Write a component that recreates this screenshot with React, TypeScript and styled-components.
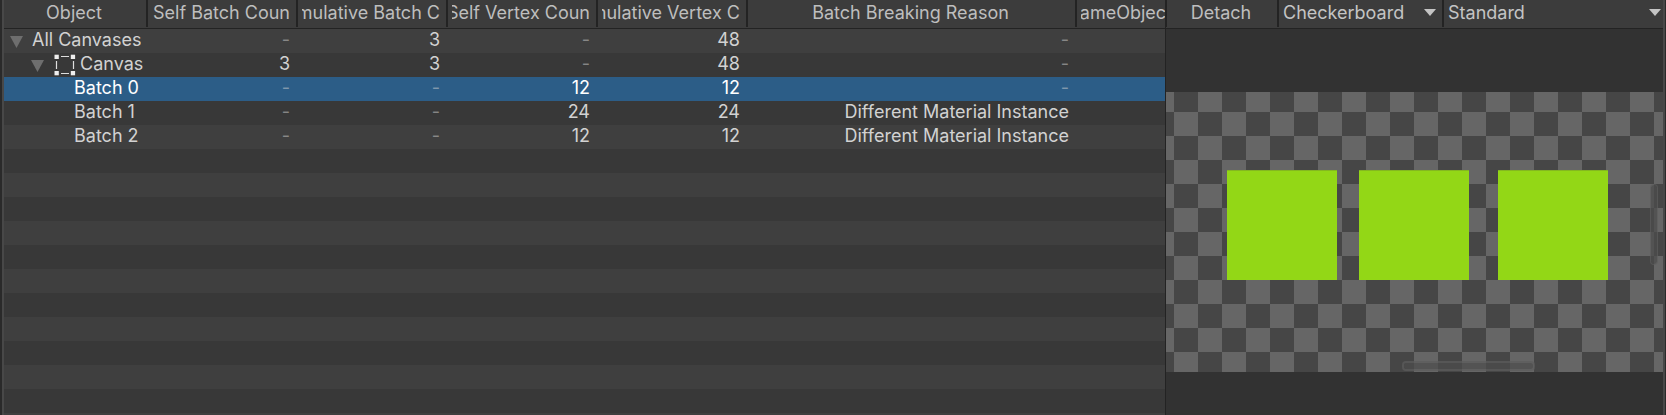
import React from "react";
import styled, { createGlobalStyle } from "styled-components";

const GlobalStyle = createGlobalStyle`
  *, *::before, *::after { box-sizing: border-box; }
  body {
    margin: 0;
    background: #2a2a2a;
    color: #d2d2d2;
    font-family: Inter, "Liberation Sans", sans-serif;
    font-size: 18px;
    line-height: 24px;
  }
`;

const Window = styled.main`
  display: flex;
  min-height: 100vh;
  margin: 0 1px 0 2px;
  border-left: 2px solid #484848;
  border-right: 2px solid #484848;
  background: #383838;
`;

const BatchPanel = styled.section`
  flex: 1;
  min-width: 0;
  overflow: hidden;
  border-right: 1px solid #232323;
  background: repeating-linear-gradient(#3f3f3f 0 24px, #383838 24px 48px) 0 29px;
`;

const BatchTable = styled.table`
  width: 100%;
  table-layout: fixed;
  border-collapse: separate;
  border-spacing: 0;
`;

const Column = styled.col<{ $width?: number }>`
  width: ${(p) => (p.$width ? `${p.$width}px` : "auto")};
`;

const HeaderCell = styled.th`
  height: 29px;
  padding: 0;
  border-bottom: 1px solid #232323;
  background: #3c3c3c;
  color: #bebebe;
  font-weight: 400;
  vertical-align: top;
`;

const HeaderBox = styled.div<{ $last?: boolean }>`
  height: 27px;
  padding: 0 ${(p) => (p.$last ? 0 : 6)}px 0 4px;
  border-right: ${(p) => (p.$last ? "0" : "2px solid #232323")};
`;

const HeaderLabel = styled.div<{ $end?: boolean }>`
  display: flex;
  justify-content: ${(p) => (p.$end ? "flex-end" : "center")};
  overflow: hidden;
  white-space: nowrap;
  line-height: 26px;
`;

const Row = styled.tr<{ $tone: "light" | "dark" | "selected" }>`
  height: 24px;
  background: ${(p) => ({ light: "#3f3f3f", dark: "#383838", selected: "#2c5d87" })[p.$tone]};
  color: ${(p) => (p.$tone === "selected" ? "#ffffff" : "#d2d2d2")};
`;

const Cell = styled.td<{ $empty?: boolean }>`
  height: 24px;
  padding: 0 8px 0 3px;
  overflow: hidden;
  text-align: right;
  line-height: 22px;
  white-space: nowrap;
  vertical-align: top;
  color: ${(p) => (p.$empty ? "rgba(210, 210, 210, 0.5)" : "inherit")};
`;

const NameCell = styled.th<{ $indent: number }>`
  height: 24px;
  padding: 0 0 0 ${(p) => p.$indent}px;
  font-weight: 400;
  text-align: left;
  vertical-align: top;
`;

const Name = styled.div`
  display: flex;
  line-height: 22px;
  white-space: nowrap;
`;

const NameText = styled.span<{ $clip?: boolean }>`
  min-width: 0;
  overflow: hidden;
  margin-right: ${(p) => (p.$clip ? 5 : 0)}px;
`;

const Foldout = styled.button`
  display: flex;
  flex: none;
  width: 22px;
  height: 24px;
  padding: 7px 0 0 0;
  border: 0;
  background: none;
`;

const RectIcon = styled.svg`
  flex: none;
  width: 22px;
  height: 22px;
  margin: 1px 4px 0 1px;
`;

const PreviewPanel = styled.section`
  display: flex;
  flex: none;
  flex-direction: column;
  width: 497px;
  background: #323232;
`;

const Toolbar = styled.div`
  display: flex;
  height: 29px;
  border-bottom: 1px solid #232323;
  background: #3c3c3c;
`;

const DetachButton = styled.button`
  width: 113px;
  height: 27px;
  padding: 0 2px 1px 0;
  border: 0;
  border-left: 1px solid #232323;
  border-right: 2px solid #232323;
  background: none;
  color: #bebebe;
  font: inherit;
`;

const SelectBox = styled.div<{ $width?: number }>`
  position: relative;
  height: 27px;
  ${(p) => (p.$width ? `width: ${p.$width}px; border-right: 2px solid #232323;` : "flex: 1;")}
`;

const Select = styled.select`
  width: 100%;
  height: 26px;
  padding: 0 20px 0 4px;
  border: 0;
  appearance: none;
  background: none;
  color: #c4c4c4;
  font: inherit;
  line-height: 26px;
`;

const SelectArrow = styled.svg<{ $right: number }>`
  position: absolute;
  top: 9px;
  right: ${(p) => p.$right}px;
  width: 12px;
  height: 7px;
  pointer-events: none;
`;

const PreviewArea = styled.div`
  flex: 1;
  padding: 63px 0 43px;
`;

const Checkerboard = styled.div`
  position: relative;
  height: 280px;
  background: conic-gradient(#464646 25%, #666666 0 50%, #464646 0 75%, #666666 0) -16px -4px / 48px 48px;
`;

const Quad = styled.div<{ $x: number }>`
  position: absolute;
  left: ${(p) => p.$x}px;
  top: 78px;
  width: 110px;
  height: 110px;
  border-top: 1px solid #84b81f;
  background: #93d716;
`;

const Scroller = styled.div<{ $vertical?: boolean }>`
  position: absolute;
  ${(p) =>
    p.$vertical
      ? "top: 92px; right: 5px; width: 8px; height: 81px; border-width: 1px;"
      : "left: 236px; bottom: 1px; width: 133px; height: 10px; border-width: 2px;"}
  border-style: solid;
  border-color: rgba(92, 92, 92, 0.7);
  border-radius: 4px;
  background: rgba(76, 76, 76, 0.7);
  background-clip: padding-box;
`;

const columns: { label: string; title: string; width?: number; end?: boolean }[] = [
  { label: "Object", title: "Object", width: 144 },
  { label: "Self Batch Coun", title: "Self Batch Count", width: 150, end: true },
  { label: "umulative Batch C", title: "Cumulative Batch Count", width: 150, end: true },
  { label: "Self Vertex Coun", title: "Self Vertex Count", width: 150, end: true },
  { label: "umulative Vertex C", title: "Cumulative Vertex Count", width: 150, end: true },
  { label: "Batch Breaking Reason", title: "Batch Breaking Reason", width: 329 },
  { label: "ameObjec", title: "GameObjects" },
];

type RowData = {
  name: string;
  indent: number;
  kind: "root" | "canvas" | "batch";
  values: string[];
  selected?: boolean;
};

const rows: RowData[] = [
  { name: "All Canvases", indent: 6, kind: "root", values: ["-", "3", "-", "48", "-", ""] },
  { name: "Canvas", indent: 27, kind: "canvas", values: ["3", "3", "-", "48", "-", ""] },
  { name: "Batch 0", indent: 70, kind: "batch", values: ["-", "-", "12", "12", "-", ""], selected: true },
  { name: "Batch 1", indent: 70, kind: "batch", values: ["-", "-", "24", "24", "Different Material Instance", ""] },
  { name: "Batch 2", indent: 70, kind: "batch", values: ["-", "-", "12", "12", "Different Material Instance", ""] },
];

const tone = (row: RowData, index: number) =>
  row.selected ? "selected" : index % 2 === 0 ? "light" : "dark";

function FoldoutToggle({ label }: { label: string }) {
  return (
    <Foldout type="button" aria-label={label} aria-expanded="true">
      <svg width="13" height="12" viewBox="0 0 13 12" aria-hidden="true">
        <path d="M0 0H13L6.5 12Z" fill="#6e6e6e" />
      </svg>
    </Foldout>
  );
}

function CanvasIcon() {
  return (
    <RectIcon viewBox="0 0 22 22" aria-hidden="true">
      <g fill="#eeeeee">
        <rect x="0.5" y="0.7" width="4.3" height="4.3" />
        <rect x="16.8" y="0.7" width="4.3" height="4.3" />
        <rect x="0.5" y="17" width="4.3" height="4.3" />
        <rect x="16.8" y="17" width="4.3" height="4.3" />
      </g>
      <path d="M7 2.5H15M7 19.5H15M2.5 7V15M19.5 7V15" stroke="#dedede" strokeWidth="1.2" />
    </RectIcon>
  );
}

export default function App() {
  return (
    <>
      <GlobalStyle />
      <Window>
        <BatchPanel>
          <BatchTable>
            <colgroup>
              {columns.map((c) => (
                <Column key={c.label} $width={c.width} />
              ))}
            </colgroup>
            <thead>
              <tr>
                {columns.map((c) => (
                  <HeaderCell key={c.label} scope="col" title={c.title}>
                    <HeaderBox $last={!c.width}>
                      <HeaderLabel $end={c.end}>{c.label}</HeaderLabel>
                    </HeaderBox>
                  </HeaderCell>
                ))}
              </tr>
            </thead>
            <tbody>
              {rows.map((row, i) => (
                <Row key={row.name} $tone={tone(row, i)} aria-selected={!!row.selected}>
                  <NameCell scope="row" $indent={row.indent}>
                    <Name>
                      {row.kind !== "batch" && <FoldoutToggle label={`Toggle ${row.name}`} />}
                      {row.kind === "canvas" && <CanvasIcon />}
                      <NameText $clip={row.kind === "canvas"}>{row.name}</NameText>
                    </Name>
                  </NameCell>
                  {row.values.map((value, j) => (
                    <Cell key={columns[j + 1].label} $empty={value === "-"}>
                      {value}
                    </Cell>
                  ))}
                </Row>
              ))}
            </tbody>
          </BatchTable>
        </BatchPanel>
        <PreviewPanel>
          <Toolbar>
            <DetachButton type="button">Detach</DetachButton>
            <SelectBox $width={165}>
              <Select aria-label="Preview background" defaultValue="Checkerboard">
                <option>Checkerboard</option>
              </Select>
              <SelectArrow $right={6} viewBox="0 0 12 7" aria-hidden="true">
                <path d="M0 0H12L6 7Z" fill="#c4c4c4" />
              </SelectArrow>
            </SelectBox>
            <SelectBox>
              <Select aria-label="Preview type" defaultValue="Standard">
                <option>Standard</option>
              </Select>
              <SelectArrow $right={2} viewBox="0 0 12 7" aria-hidden="true">
                <path d="M0 0H12L6 7Z" fill="#c4c4c4" />
              </SelectArrow>
            </SelectBox>
          </Toolbar>
          <PreviewArea>
            <Checkerboard>
              <Quad $x={61} />
              <Quad $x={193} />
              <Quad $x={332} />
              <Scroller $vertical />
              <Scroller />
            </Checkerboard>
          </PreviewArea>
        </PreviewPanel>
      </Window>
    </>
  );
}
